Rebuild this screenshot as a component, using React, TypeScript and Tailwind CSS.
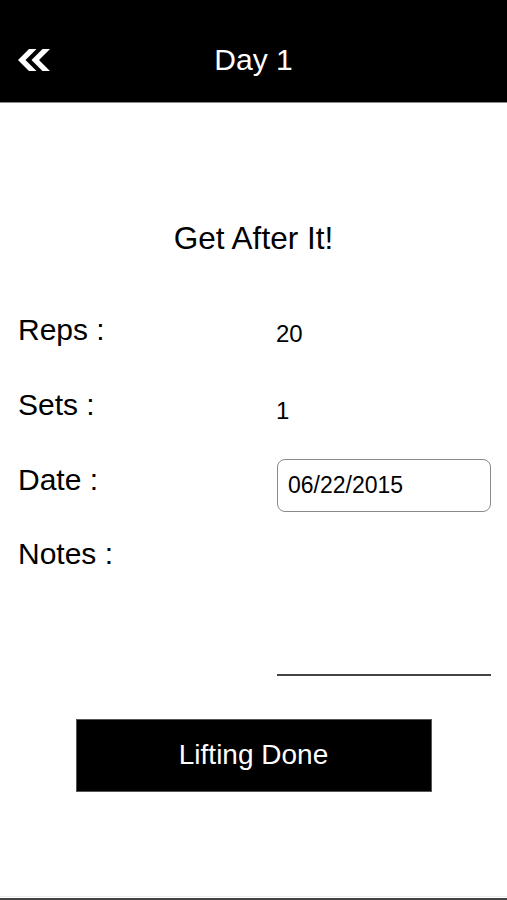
import React from "react";

function DoubleChevron() {
  return (
    <svg width="32" height="22" viewBox="0 0 32 22" fill="white" aria-hidden="true">
      <path d="M0 11 L11 0 H18.5 L7.5 11 L18.5 22 H11 Z" />
      <path d="M13.5 11 L24.5 0 H32 L21 11 L32 22 H24.5 Z" />
    </svg>
  );
}

export default function App() {
  return (
    <div
      className="h-[900px] w-full bg-white flex flex-col text-black"
      style={{ fontFamily: '"Liberation Sans", Arial, sans-serif' }}
    >
      <header className="h-[103px] shrink-0 bg-black border-b border-[#8c8c8c] pt-[18px] grid grid-cols-[1fr_auto_1fr] items-center">
        <div className="pl-[18px] flex items-center">
          <DoubleChevron />
        </div>
        <h1 className="text-white text-[30px] leading-none font-normal">Day 1</h1>
        <div />
      </header>

      <main className="flex-1 flex flex-col">
        <h2 className="mt-[120px] text-center text-[31.5px] leading-none font-normal">Get After It!</h2>

        <div className="mt-[60px] pl-[18px] pr-[16px] grid grid-cols-[258px_1fr] items-start">
          <div className="text-[30px] leading-none">Reps :</div>
          <div className="mt-[7px] text-[24px] leading-none">20</div>
        </div>

        <div className="mt-[44px] pl-[18px] pr-[16px] grid grid-cols-[258px_1fr] items-start">
          <div className="text-[30px] leading-none">Sets :</div>
          <div className="mt-[9px] text-[24px] leading-none">1</div>
        </div>

        <div className="mt-[36px] pl-[18px] pr-[16px] grid grid-cols-[258px_1fr] items-start">
          <div className="mt-[6px] text-[30px] leading-none">Date :</div>
          <div className="ml-[1px] h-[53px] rounded-[8px] border border-[#8a8a8a] flex items-center pl-[10px] text-[23px] leading-none">
            06/22/2015
          </div>
        </div>

        <div className="mt-[27px] pl-[18px] pr-[16px] grid grid-cols-[258px_1fr] items-start">
          <div className="text-[30px] leading-none">Notes :</div>
          <div className="ml-[1px] h-[137px] border-b-2 border-[#444]" />
        </div>

        <button className="mt-[43px] mx-auto w-[356px] h-[73px] bg-black border border-[#555] text-white text-[28px] leading-none flex items-center justify-center">
          Lifting Done
        </button>

        <div className="flex-1" />
        <div className="h-[1px] bg-[#ececec]" />
        <div className="h-[1px] bg-white" />
        <div className="h-[2px] bg-[#444]" />
      </main>
    </div>
  );
}
